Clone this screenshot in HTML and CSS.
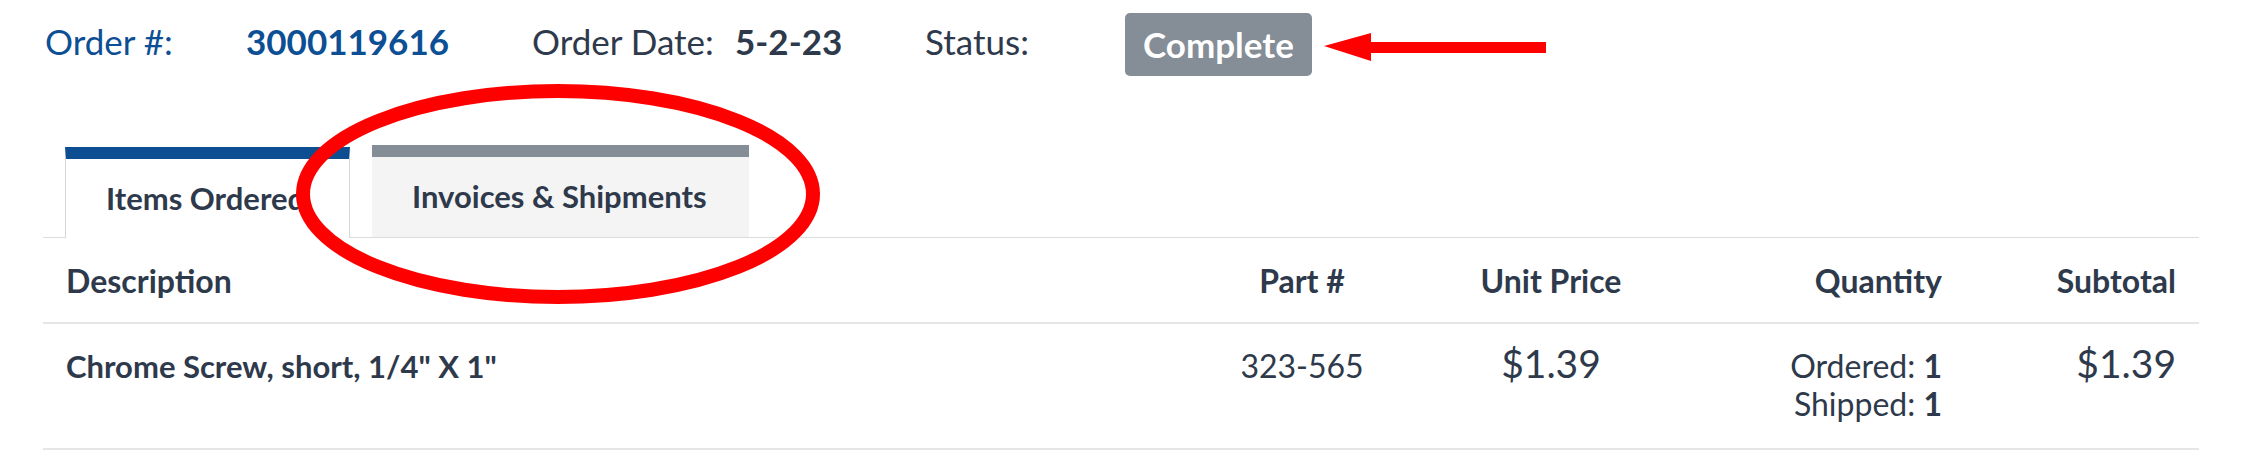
FILE: index.html
```html
<!DOCTYPE html>
<html lang="en">
<head>
<meta charset="utf-8">
<title>Order 3000119616</title>
<link rel="stylesheet" href="styles.css">
</head>
<body>
<div class="page">
  <div class="order-head">
    <span class="lbl lbl-order">Order #:</span>
    <span class="val val-order">3000119616</span>
    <span class="lbl lbl-date">Order Date:</span>
    <span class="val val-date">5-2-23</span>
    <span class="lbl lbl-status">Status:</span>
    <span class="badge">Complete</span>
  </div>

  <div class="tabs">
    <div class="tab tab-active">Items Ordered</div>
    <div class="tab tab-idle">Invoices &amp; Shipments</div>
  </div>

  <div class="grid grid-head">
    <div class="c c-desc">Description</div>
    <div class="c c-part">Part #</div>
    <div class="c c-price">Unit Price</div>
    <div class="c c-qty">Quantity</div>
    <div class="c c-sub">Subtotal</div>
  </div>
  <div class="grid grid-row">
    <div class="c c-desc">Chrome Screw, short, 1/4" X 1"</div>
    <div class="c c-part">323-565</div>
    <div class="c c-price">$1.39</div>
    <div class="c c-qty">
      <div>Ordered: <b>1</b></div>
      <div>Shipped: <b>1</b></div>
    </div>
    <div class="c c-sub">$1.39</div>
  </div>
</div>

<svg class="annot" width="2241" height="466" viewBox="0 0 2241 466" xmlns="http://www.w3.org/2000/svg">
  <ellipse cx="558" cy="194" rx="255" ry="103" fill="none" stroke="#ff0000" stroke-width="14"/>
  <polygon points="1324,46 1371,33 1371,42 1546,42 1546,53 1371,53 1371,61" fill="#ff0000"/>
</svg>
</body>
</html>
```

FILE: styles.css
```css
html, body {
  margin: 0;
  padding: 0;
  background: #ffffff;
}

body {
  font-family: Lato, "Open Sans", "Liberation Sans", sans-serif;
  color: #2e3a4b;
  position: relative;
  width: 2241px;
  height: 466px;
  overflow: hidden;
}

.page {
  padding: 0 42px 0 43px;
}

/* ---------- order header ---------- */
.order-head {
  display: flex;
  align-items: flex-start;
  padding-top: 13px;
  padding-left: 2px;
  height: 63px;
}

.lbl, .val {
  display: inline-block;
  font-size: 35px;
  line-height: 38px;
  margin-top: 9px;
  white-space: nowrap;
}

.lbl-order {
  width: 201px;
  color: #0d4f94;
}

.val-order {
  width: 286px;
  color: #0d4f94;
  font-weight: 700;
}

.lbl-date {
  width: 203px;
}

.val-date {
  width: 190px;
  font-weight: 700;
}

.lbl-status {
  width: 200px;
}

.badge {
  display: inline-block;
  height: 63px;
  line-height: 62px;
  padding: 0 18px;
  background: #858d96;
  color: #ffffff;
  font-weight: 700;
  font-size: 35px;
  border-radius: 5px;
}

/* ---------- tabs ---------- */
.tabs {
  display: flex;
  align-items: flex-end;
  margin-top: 69px;
  padding-left: 22px;
  border-bottom: 1px solid #dcdcdc;
}

.tab {
  font-size: 31px;
  font-weight: 700;
  line-height: 36px;
  padding: 21px 40px 0;
  white-space: nowrap;
  box-sizing: border-box;
}

.tab-active {
  width: 285px;
  height: 91px;
  background: #ffffff;
  border-top: 12px solid #0d4e92;
  border-left: 1px solid #d6d6d6;
  border-right: 1px solid #d6d6d6;
  margin-bottom: -1px;
  overflow: hidden;
}

.tab-idle {
  width: 377px;
  height: 92px;
  margin-left: 22px;
  background: #f4f4f4;
  border-top: 12px solid #858d96;
}

/* ---------- table ---------- */
.grid {
  display: grid;
  grid-template-columns: 1121px 276px 222px 303px 234px;
  border-bottom: 2px solid #e6e6e6;
}

.grid-head {
  align-items: start;
  padding: 25px 0 23px;
  font-size: 32px;
  font-weight: 700;
  line-height: 36px;
}

.grid-row {
  align-items: baseline;
  padding: 21px 0 25px;
}

.c {
  padding: 0 23px;
  white-space: nowrap;
}

.c-desc { text-align: left; }
.c-part { text-align: center; }
.c-price { text-align: center; }
.c-qty { text-align: right; }
.c-sub { text-align: right; }

.grid-row .c-desc {
  font-size: 31px;
  font-weight: 700;
  line-height: 36px;
}

.grid-row .c-part {
  font-size: 32px;
  line-height: 36px;
}

.grid-row .c-price,
.grid-row .c-sub {
  font-size: 39px;
  line-height: 36px;
}

.grid-row .c-qty {
  font-size: 32px;
  line-height: 38px;
}

.grid-row .c-qty b {
  font-weight: 700;
}

/* ---------- annotation overlay ---------- */
.annot {
  position: absolute;
  left: 0;
  top: 0;
  pointer-events: none;
}
```
